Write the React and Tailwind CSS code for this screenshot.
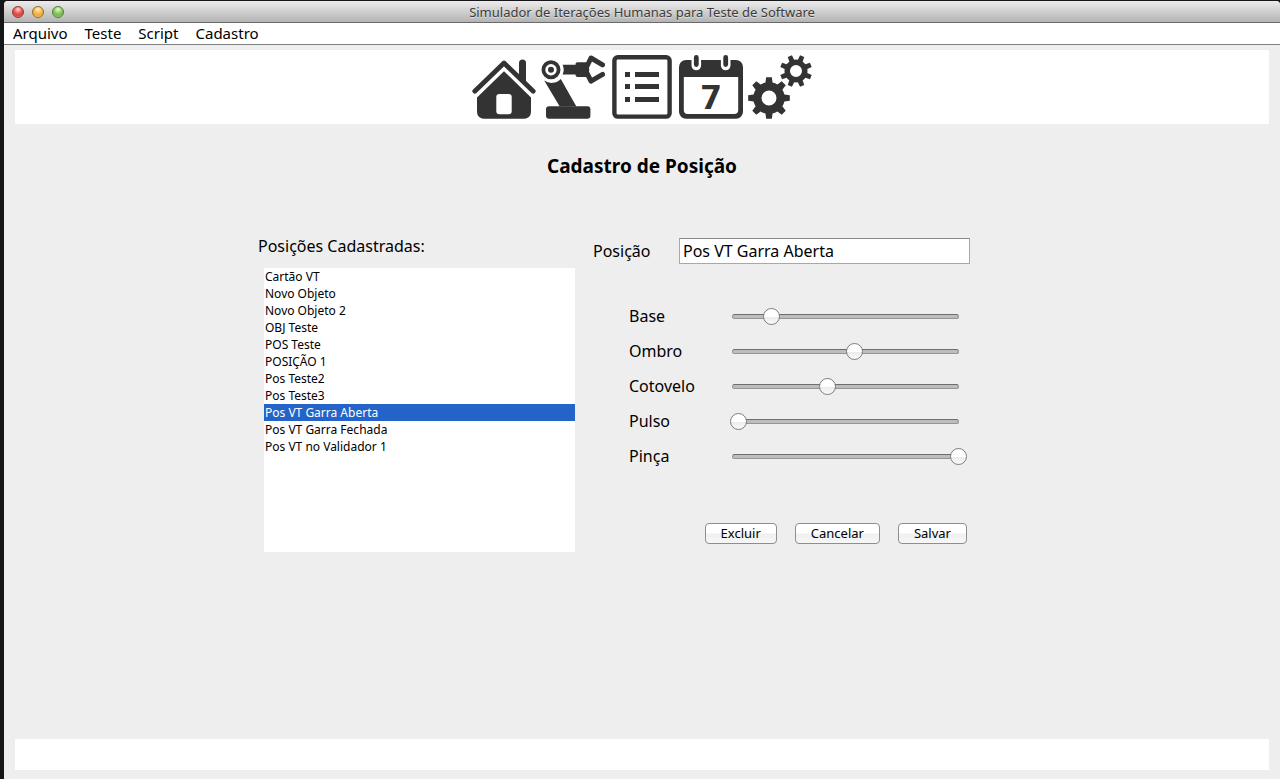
import { useState } from "react";

const INK = "#333333";

const MENUS = ["Arquivo", "Teste", "Script", "Cadastro"];

const POSITIONS = [
  "Cartão VT",
  "Novo Objeto",
  "Novo Objeto 2",
  "OBJ Teste",
  "POS Teste",
  "POSIÇÃO 1",
  "Pos Teste2",
  "Pos Teste3",
  "Pos VT Garra Aberta",
  "Pos VT Garra Fechada",
  "Pos VT no Validador 1",
];

const JOINTS = [
  { id: "base", label: "Base", value: 27 },
  { id: "ombro", label: "Ombro", value: 95 },
  { id: "cotovelo", label: "Cotovelo", value: 73 },
  { id: "pulso", label: "Pulso", value: 0 },
  { id: "pinca", label: "Pinça", value: 180 },
];

// Outline of an eight-toothed gear centred on (cx, cy).
function gearPath(cx, cy, body, outer, rootHalf, tipHalf, turn) {
  const point = (r, deg) => {
    const a = ((deg + turn) * Math.PI) / 180;
    return `${(cx + r * Math.cos(a)).toFixed(2)} ${(cy + r * Math.sin(a)).toFixed(2)}`;
  };
  let d = "";
  for (let i = 0; i < 8; i++) {
    const mid = i * 45;
    d += `${i === 0 ? "M" : `A${body} ${body} 0 0 1 `}${point(body, mid - rootHalf)}`;
    d += `L${point(outer, mid - tipHalf)}L${point(outer, mid + tipHalf)}L${point(body, mid + rootHalf)}`;
  }
  return `${d}A${body} ${body} 0 0 1 ${point(body, -rootHalf)}Z`;
}

function HomeIcon() {
  return (
    <svg viewBox="0 0 64 64" className="size-16" fill={INK} aria-hidden="true">
      <path d="M47 24V8a3.4 3.4 0 0 1 7 0v21z" />
      <path d="M2.8 36.2 32 8l29.2 28.2" fill="none" stroke={INK} strokeWidth="4.8" strokeLinecap="round" strokeLinejoin="round" />
      <path
        fillRule="evenodd"
        d="M32 16.2 59 42.5V57a6.7 6.7 0 0 1-6.7 6.7H11.7A6.7 6.7 0 0 1 5 57V42.5zM27.3 39a3 3 0 0 0-3 3v14.3a3 3 0 0 0 3 3h9.4a3 3 0 0 0 3-3V42a3 3 0 0 0-3-3z"
      />
    </svg>
  );
}

function RobotIcon() {
  return (
    <svg viewBox="0 0 64 64" className="size-16" fill={INK} aria-hidden="true">
      <circle cx="10" cy="14.7" r="7.6" fill="none" stroke={INK} strokeWidth="3.8" />
      <circle cx="10" cy="14.7" r="3" />
      <path d="M3.2 25.4A12.6 12.6 0 0 0 19.8 24L35.4 51.6H18.7z" />
      <rect x="5" y="51.3" width="44.4" height="12.4" rx="3" />
      <path d="M21.6 9.8H34.6V8.3L36 7.2h10l2.4 7.4L46 22H36l-1.4-1.2v-1.3H21.6a12 12 0 0 0 0-9.7z" />
      <path d="M61.6 9.8 50 3 45.6 12M45.6 17.4 50 26.2 61.6 19.4" fill="none" stroke={INK} strokeWidth="5" strokeLinejoin="round" strokeLinecap="round" />
    </svg>
  );
}

function ListIcon() {
  return (
    <svg viewBox="0 0 64 64" className="size-16" fill={INK} aria-hidden="true">
      <rect x="4.4" y="2.2" width="55.2" height="59.4" rx="3.4" fill="none" stroke={INK} strokeWidth="4.4" />
      <path d="M15 17h5v5h-5zM25 17h24v5H25zM15 29h5v5h-5zM25 29h24v5H25zM15 42h5v5h-5zM25 42h24v5H25z" />
    </svg>
  );
}

function CalendarIcon() {
  return (
    <svg viewBox="0 0 64 64" className="size-16" fill={INK} aria-hidden="true">
      <path
        fillRule="evenodd"
        d="M7 5h50a7 7 0 0 1 7 7v44.7a7 7 0 0 1-7 7H7a7 7 0 0 1-7-7V12a7 7 0 0 1 7-7zM4.8 22v33a4 4 0 0 0 4 4h46.4a4 4 0 0 0 4-4V22z"
      />
      <path d="M17.3 3v7.5M46.7 3v7.5" stroke="#ffffff" strokeWidth="9.6" strokeLinecap="round" />
      <path d="M17.3 2.5v7M46.7 2.5v7" stroke={INK} strokeWidth="4.8" strokeLinecap="round" />
      <text x="32" y="54" textAnchor="middle" className="font-['Roboto',sans-serif] text-[34px] font-black">
        7
      </text>
    </svg>
  );
}

function GearsIcon() {
  return (
    <svg viewBox="0 0 64 64" className="size-16" fill={INK} aria-hidden="true">
      <path fillRule="evenodd" d={`${gearPath(21, 43, 15.8, 21, 13, 7.8, 0)}M28.5 43a7.5 7.5 0 1 0-15 0a7.5 7.5 0 1 0 15 0z`} />
      <path fillRule="evenodd" d={`${gearPath(48, 16, 11.5, 16.2, 13, 8, 22.5)}M54 16a6 6 0 1 0-12 0a6 6 0 1 0 12 0z`} />
    </svg>
  );
}

const TOOLS = [
  { label: "Início", Icon: HomeIcon },
  { label: "Robô", Icon: RobotIcon },
  { label: "Lista", Icon: ListIcon },
  { label: "Agenda", Icon: CalendarIcon },
  { label: "Configurações", Icon: GearsIcon },
];

function TitleBar() {
  const light = "size-3 rounded-full border";
  return (
    <header className="relative flex h-[22px] items-center justify-center rounded-t border-b border-[#6a6a6a] bg-linear-to-b from-[#ececec] to-[#b4b4b4]">
      <div className="absolute left-2 flex gap-2">
        <button aria-label="Fechar" className={`${light} border-[#8f3a37] bg-[radial-gradient(circle_at_50%_25%,#ffd9d6_0%,#f0605a_40%,#d9413c_65%,#ff9a94_100%)]`} />
        <button aria-label="Minimizar" className={`${light} border-[#9a6a25] bg-[radial-gradient(circle_at_50%_25%,#fff3cf_0%,#f7bf52_40%,#eda93a_65%,#ffe68a_100%)]`} />
        <button aria-label="Ampliar" className={`${light} border-[#4f7f35] bg-[radial-gradient(circle_at_50%_25%,#e8fadb_0%,#92cf6c_40%,#74b850_65%,#c5f09a_100%)]`} />
      </div>
      <h1 className="text-[13px] leading-5 text-[#3c3c3c] [text-shadow:0_1px_0_#ffffff80]">
        Simulador de Iterações Humanas para Teste de Software
      </h1>
    </header>
  );
}

function JointSlider({ id, label, value, onChange }) {
  return (
    <div className="flex h-[35px] items-center">
      <label htmlFor={id} className="w-[101px] pb-0.5 text-base">
        {label}
      </label>
      <div className="grid w-[237px] items-center">
        <span className="col-start-1 row-start-1 mr-2 ml-0.5 h-[5px] rounded-full border border-[#959595] border-t-[#6e6e6e] bg-[#bdbdbd]" />
        <input
          id={id}
          type="range"
          min="0"
          max="180"
          value={value}
          onChange={(e) => onChange(Number(e.target.value))}
          className="relative col-start-1 row-start-1 h-[17px] w-full appearance-none bg-transparent [&::-webkit-slider-thumb]:size-[17px] [&::-webkit-slider-thumb]:appearance-none [&::-webkit-slider-thumb]:rounded-full [&::-webkit-slider-thumb]:border [&::-webkit-slider-thumb]:border-[#7d7d7d] [&::-webkit-slider-thumb]:bg-linear-to-b [&::-webkit-slider-thumb]:from-white [&::-webkit-slider-thumb]:from-50% [&::-webkit-slider-thumb]:via-[#ececec] [&::-webkit-slider-thumb]:via-55% [&::-webkit-slider-thumb]:to-[#fafafa]"
        />
      </div>
    </div>
  );
}

function PushButton({ children }) {
  return (
    <button
      type="button"
      className="h-[21px] rounded-[4px] border border-[#8e8e8e] bg-linear-to-b from-white from-45% via-[#f0f0f0] via-55% to-[#f7f7f7] px-[15px] pb-px text-[13px] leading-[18px]"
    >
      {children}
    </button>
  );
}

export default function App() {
  const [selected, setSelected] = useState("Pos VT Garra Aberta");
  const [name, setName] = useState("Pos VT Garra Aberta");
  const [joints, setJoints] = useState(JOINTS);

  const setJoint = (id, value) => setJoints(joints.map((j) => (j.id === id ? { ...j, value } : j)));

  return (
    <div className="min-h-screen bg-[#161618] pt-px pl-1 font-['Noto_Sans',sans-serif] text-black">
      <div className="flex min-h-[calc(100vh-1px)] flex-col rounded-t bg-[#eeeeee]">
        <TitleBar />
        <nav className="flex h-[22px] items-center gap-[17px] border-b border-[#808080] bg-white px-[9px] pb-0.5 text-[15px] leading-5">
          {MENUS.map((m) => (
            <button key={m} type="button">
              {m}
            </button>
          ))}
        </nav>

        <div className="mx-[11px] mt-[5px] flex h-[74px] items-center justify-center gap-[5px] bg-white">
          {TOOLS.map(({ label, Icon }) => (
            <button key={label} type="button" aria-label={label}>
              <Icon />
            </button>
          ))}
        </div>

        <main className="flex-1">
          <h2 className="mt-7 text-center text-[19px] leading-7 font-bold">Cadastro de Posição</h2>

          <div className="mx-auto mt-[54px] flex max-w-3xl items-start gap-[18px]">
            <div className="flex w-[317px] flex-col">
              <label htmlFor="positions" className="text-base leading-6">
                Posições Cadastradas:
              </label>
              <select
                id="positions"
                size="16"
                value={selected}
                onChange={(e) => {
                  setSelected(e.target.value);
                  setName(e.target.value);
                }}
                className="mt-[10px] ml-1.5 h-[284px] appearance-none overflow-hidden bg-white text-xs outline-none"
              >
                {POSITIONS.map((p) => (
                  <option
                    key={p}
                    value={p}
                    className="h-[17px] min-h-0 px-px py-0 leading-[17px] text-black checked:bg-linear-to-r checked:from-[#2464c8] checked:to-[#2464c8] checked:text-white"
                  >
                    {p}
                  </option>
                ))}
              </select>
            </div>

            <form className="mt-1 w-[377px]" onSubmit={(e) => e.preventDefault()}>
              <div className="flex items-center">
                <label htmlFor="position-name" className="w-[86px] text-base">
                  Posição
                </label>
                <input
                  id="position-name"
                  type="text"
                  value={name}
                  onChange={(e) => setName(e.target.value)}
                  className="h-[26px] min-w-0 flex-1 border border-[#a8a8a8] border-t-[#8a8a8a] bg-white px-[3px] text-base outline-none"
                />
              </div>
              <div className="mt-[35px] pl-9">
                {joints.map((j) => (
                  <JointSlider key={j.id} {...j} onChange={(v) => setJoint(j.id, v)} />
                ))}
              </div>
              <div className="mt-[49px] mr-[3px] flex justify-end gap-[18px]">
                <PushButton>Excluir</PushButton>
                <PushButton>Cancelar</PushButton>
                <PushButton>Salvar</PushButton>
              </div>
            </form>
          </div>
        </main>

        <footer className="mx-[11px] mb-[9px] h-[31px] bg-white" />
      </div>
    </div>
  );
}
